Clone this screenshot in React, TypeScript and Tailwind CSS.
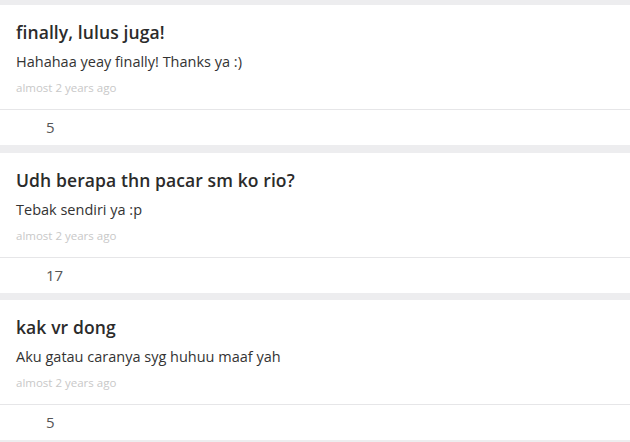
import React from "react";

const items = [
  { q: "finally, lulus juga!", a: "Hahahaa yeay finally! Thanks ya :)", n: "5" },
  { q: "Udh berapa thn pacar sm ko rio?", a: "Tebak sendiri ya :p", n: "17" },
  { q: "kak vr dong", a: "Aku gatau caranya syg huhuu maaf yah", n: "5" },
];

export default function App() {
  return (
    <div
      className="w-[630px] h-[442px] bg-[#ededef] pt-[5px] flex flex-col gap-[7.5px] overflow-hidden [font-variant-ligatures:none]"
      style={{ fontFamily: "'Open Sans', sans-serif" }}
    >
      {items.map((it, i) => (
        <div key={i} className="bg-white h-[140px] shrink-0 flex flex-col">
          <div className="h-[105px] border-b border-[#e6e6e8] px-4 pt-[15px]">
            <div className="text-[17.5px] leading-[24px] font-semibold text-[#2b2b2b] tracking-[0.1px]">{it.q}</div>
            <div className="text-[14.5px] leading-[20px] text-[#333] mt-[8px]">{it.a}</div>
            <div className="text-[11.5px] leading-[14px] text-[#c8c8c8] mt-[9px]">almost 2 years ago</div>
          </div>
          <div className="flex-1 flex items-center pl-[46px] text-[15px] text-[#555]">{it.n}</div>
        </div>
      ))}
    </div>
  );
}
